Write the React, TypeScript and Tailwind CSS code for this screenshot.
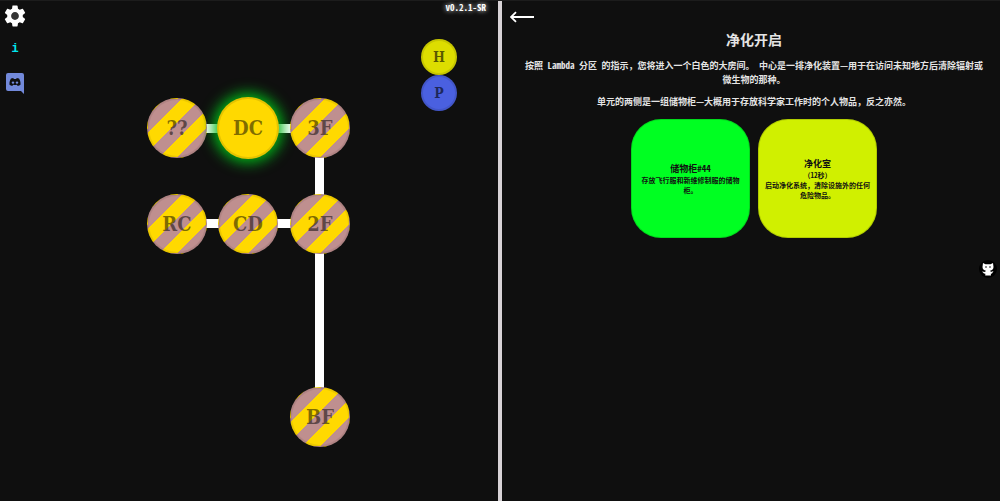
import { MdSettings } from "react-icons/md";

type RoomNode = { label: string; place: string; active?: boolean };

const rooms: RoomNode[] = [
  { label: "??", place: "left-[147px] top-[97px]" },
  { label: "DC", place: "left-[217px] top-[96px]", active: true },
  { label: "3F", place: "left-[290px] top-[97px]" },
  { label: "RC", place: "left-[147px] top-[193px]" },
  { label: "CD", place: "left-[218px] top-[193px]" },
  { label: "2F", place: "left-[290px] top-[193px]" },
  { label: "BF", place: "left-[290px] top-[386px]" },
];

const corridors = [
  "left-[177px] top-[123px] w-[143px] h-[9px]",
  "left-[177px] top-[218px] w-[143px] h-[9px]",
  "left-[315px] top-[127px] w-[9px] h-[288px]",
];

function Room({ label, place, active }: RoomNode) {
  const look = active
    ? "size-[62px] bg-[#ffd900] shadow-[inset_0_0_0_1px_rgba(0,0,0,0.1),0_0_14px_4px_#00b818]"
    : "size-[60px] bg-[repeating-linear-gradient(135deg,#ffd900_-1px_12px,#bf8f8f_12px_24px)] shadow-[inset_0_0_0_1px_rgba(0,0,0,0.07)]";
  return (
    <button
      className={`absolute flex items-center justify-center rounded-full border border-black/10 font-['DejaVu_Serif_Condensed','DejaVu_Serif',serif] text-xl font-bold text-black/50 ${look} ${place}`}
    >
      {label}
    </button>
  );
}

function MapPanel() {
  return (
    <section className="relative overflow-hidden">
      <nav className="flex w-7 flex-col items-center gap-3 pt-0.5 pl-0.5">
        <button aria-label="Settings" className="relative">
          <span className="absolute inset-1.5 rounded-full bg-[#333]" />
          <MdSettings className="relative size-[26px] text-white" />
        </button>
        <button className="font-['Liberation_Mono',monospace] text-xs leading-4 font-bold text-[#00e5ee]">i</button>
        <a href="#discord" aria-label="Discord" className="mt-1">
          <svg viewBox="0 0 18 21" className="h-[21px] w-[18px]">
            <path fill="#7289da" d="M2 0h14a2 2 0 0 1 2 2v19l-3-3H2a2 2 0 0 1-2-2V2a2 2 0 0 1 2-2z" />
            <path
              fill="#0f0f0f"
              d="M5 5.6 7.3 5l.5.9h2.4l.5-.9 2.3.6c1.2 1.9 1.7 4 1.5 6.1-.8.7-1.8 1.1-2.8 1.3l-.8-1.2c-1.2.3-2.600.3-3.800 0L6.300 13c-1-.2-2-.6-2.800-1.300C3.300 9.600 3.800 7.500 5 5.600z"
            />
            <circle cx="7" cy="9.600" r="1.200" fill="#7289da" />
            <circle cx="11" cy="9.600" r="1.200" fill="#7289da" />
          </svg>
        </a>
      </nav>
      <span className="absolute top-px right-3 text-[9px] leading-3 font-bold text-white [text-shadow:0_0_5px_#fff]">
        v0.2.1-SR
      </span>
      {corridors.map((c) => (
        <div key={c} className={`absolute bg-white ${c}`} />
      ))}
      {rooms.map((r) => (
        <Room key={r.label} {...r} />
      ))}
      <div className="absolute top-[38px] right-[41px] flex flex-col font-['DejaVu_Serif_Condensed','DejaVu_Serif',serif] text-sm font-bold text-black/60">
        <button className="size-9 rounded-full border-2 border-black/10 bg-[#dddd00]">H</button>
        <button className="size-9 rounded-full border-2 border-black/10 bg-[#4a60e0]">P</button>
      </div>
    </section>
  );
}

function StoryPanel() {
  return (
    <main className="flex flex-col pr-0.5 pl-2 text-center text-[#e4e4e4]">
      <button aria-label="Back" className="mt-2.5 self-start text-white">
        <svg viewBox="0 0 26 12" className="h-3 w-[26px]" fill="none" stroke="currentColor" strokeWidth="1.800">
          <path d="M24 6H1M6 1.200 1 6l5 4.800" />
        </svg>
      </button>
      <h1 className="mt-1.5 text-sm leading-5 font-bold">净化开启</h1>
      <div className="mt-2.5 flex flex-col gap-2 px-3 text-[9px] leading-[14px] font-bold">
        <p>
          按照 Lambda 分区 的指示，您将进入一个白色的大房间。 中心是一排净化装置—用于在访问未知地方后清除辐射或微生物的那种。
        </p>
        <p>单元的两侧是一组储物柜—大概用于存放科学家工作时的个人物品，反之亦然。</p>
      </div>
      <div className="mt-2.5 flex justify-center gap-2 text-[7px] leading-[10px] font-bold text-[#111]">
        <button className="flex size-[119px] flex-col items-center justify-center rounded-[30px] border border-black/15 bg-[#00ff22] px-2">
          <span className="text-[9px] leading-3">储物柜#44</span>
          <span>存放飞行服和新维修制服的储物柜。</span>
        </button>
        <button className="flex size-[119px] flex-col items-center justify-center rounded-[30px] border border-black/15 bg-[#d0f000] px-1">
          <span className="text-[9px] leading-3">净化室</span>
          <span>（12秒）</span>
          <span>启动净化系统，清除设施外的任何危险物品。</span>
        </button>
      </div>
    </main>
  );
}

export default function App() {
  return (
    <div className="relative grid min-h-screen grid-cols-[1fr_4px_1fr] border-t border-[#1c1c1c] bg-[#0f0f0f] font-['Noto_Sans_Mono_CJK_SC','Liberation_Mono','Noto_Sans_CJK_SC',monospace]">
      <MapPanel />
      <div className="bg-[#d8d3d6]" />
      <StoryPanel />
      <a
        href="#github"
        aria-label="GitHub"
        className="absolute top-[259px] right-[3px] flex size-[18px] items-center justify-center rounded-full bg-black"
      >
        <svg viewBox="0 0 14 14" className="size-[14px]">
          <path
            fill="#fff"
            d="M2 1l2.500 1.200h5L12 1l.5 4c0 2.500-1.500 3.300-3.200 3.500l.5 1.500 2.700-1-1.500 2.500-1.200.3.200 1.700H4.200L4.400 11.800 3 11.500 1 9.500l3.200.5.5-1.500C3 8.300 1.500 7.500 1.500 5z"
          />
          <path stroke="#222" strokeWidth="1" d="M4 5h2M8 5h2" />
        </svg>
      </a>
    </div>
  );
}
